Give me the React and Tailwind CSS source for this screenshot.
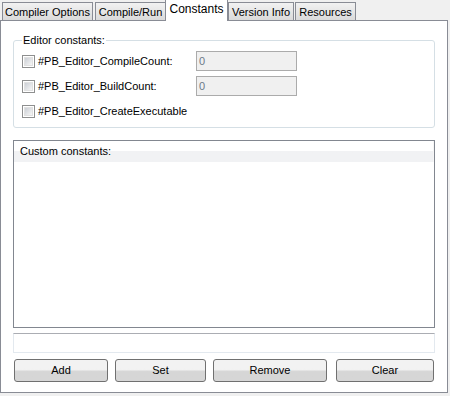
import React from "react";

const tabs = [
  { label: "Compiler Options", width: "w-[91px]", gap: "ml-[2px]" },
  { label: "Compile/Run", width: "w-[71px]", gap: "ml-[2px]" },
  { label: "Constants", width: "w-[63px]", gap: "ml-[-1px]", active: true },
  { label: "Version Info", width: "w-[66px]", gap: "ml-[0px]" },
  { label: "Resources", width: "w-[61px]", gap: "ml-[1px]" },
];

const editorConstants = [
  { name: "#PB_Editor_CompileCount:", value: "0" },
  { name: "#PB_Editor_BuildCount:", value: "0" },
  { name: "#PB_Editor_CreateExecutable" },
];

const buttons = [
  { label: "Add", width: "w-[94px]", gap: "ml-[1px]" },
  { label: "Set", width: "w-[91px]", gap: "ml-[7px]" },
  { label: "Remove", width: "w-[114px]", gap: "ml-[7px]" },
  { label: "Clear", width: "w-[98px]", gap: "ml-[9px]" },
];

const Checkbox = () => (
  <span className="flex h-[13px] w-[13px] shrink-0 items-center justify-center border border-[#8e8f8f] bg-white">
    <span className="h-[9px] w-[9px] bg-gradient-to-br from-[#cbcfd5] to-[#f6f6f6] border border-[#e0e0e0]" />
  </span>
);

const Tab = ({ tab }) => {
  if (tab.active) {
    return (
      <div
        className={`${tab.gap} ${tab.width} relative z-10 -mb-px flex h-[22px] items-start justify-center border border-b-0 border-[#898c95] bg-white pt-[2px] text-[12px] leading-[14px]`}
      >
        {tab.label}
      </div>
    );
  }
  return (
    <div
      className={`${tab.gap} ${tab.width} flex h-[18px] items-center justify-center border border-b-0 border-[#898c95] bg-gradient-to-b from-[#f2f2f2] to-[#dadada] pt-[1px]`}
    >
      {tab.label}
    </div>
  );
};

const App = () => {
  return (
    <div className="h-[396px] w-[450px] overflow-hidden bg-[#f0f0f0] font-['Liberation_Sans',Arial,sans-serif] text-[11px] leading-[13px] text-black">
      <div className="flex h-[20px] items-end">
        {tabs.map((tab) => (
          <Tab key={tab.label} tab={tab} />
        ))}
      </div>

      <div className="flex h-[373px] w-[448px] flex-col border border-[#898c95] bg-white px-[12px] pt-[19px]">
        <div className="relative h-[88px] w-[422px] rounded-[3px] border border-[#d5dfe5] pl-[8px] pt-[10px]">
          <span className="absolute left-[8px] top-[-7px] bg-white px-[1px]">
            Editor constants:
          </span>
          <div className="flex flex-col gap-[5px]">
            {editorConstants.map((item) => (
              <div key={item.name} className="flex h-[20px] items-center">
                <div className="flex w-[174px] items-center gap-[3px]">
                  <Checkbox />
                  <span className="whitespace-nowrap">{item.name}</span>
                </div>
                {item.value && (
                  <div className="flex h-[20px] w-[101px] items-center border border-[#ababab] bg-[#f0f0f0] px-[2px] text-[#6d7a88]">
                    {item.value}
                  </div>
                )}
              </div>
            ))}
          </div>
        </div>

        <div className="mt-[12px] flex h-[188px] w-[422px] flex-col border border-[#828790] bg-white">
          <div className="flex h-[21px] items-center border-r border-[#f6f6f6] bg-gradient-to-b from-white from-50% to-[#f1f2f4] to-50% pl-[6px]">
            Custom constants:
          </div>
        </div>

        <div className="mt-[5px] h-[20px] w-[422px] border border-[#e3e9ef] border-t-[#abadb3] bg-white" />

        <div className="mt-[6px] flex">
          {buttons.map((btn) => (
            <button
              key={btn.label}
              type="button"
              className={`${btn.gap} ${btn.width} h-[23px] rounded-[3px] border border-[#707070] bg-gradient-to-b from-[#f2f2f2] from-45% to-[#d6d6d6] to-55% text-[11px]`}
            >
              {btn.label}
            </button>
          ))}
        </div>
      </div>
    </div>
  );
};

export default App;
